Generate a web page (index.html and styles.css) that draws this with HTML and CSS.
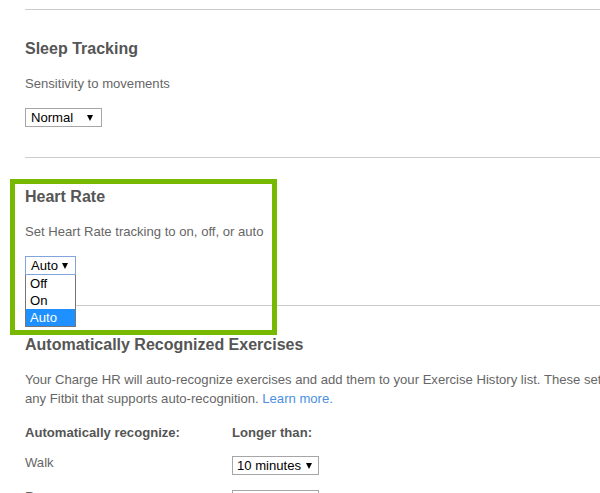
FILE: index.html
```html
<!DOCTYPE html>
<html lang="en">
<head>
  <meta charset="UTF-8">
  <meta name="viewport" content="width=device-width, initial-scale=1.0">
  <title>Device Settings</title>
  <link rel="stylesheet" href="styles.css">
</head>
<body>
  <div class="settings">
    <section class="setting">
      <h2>Sleep Tracking</h2>
      <p>Sensitivity to movements</p>
      <div class="select select-normal">
        <span class="select-value">Normal</span>
        <span class="select-arrow"></span>
      </div>
    </section>

    <section class="setting">
      <h2>Heart Rate</h2>
      <p>Set Heart Rate tracking to on, off, or auto</p>
      <div class="select-wrap">
        <div class="select select-auto is-open">
          <span class="select-value">Auto</span>
          <span class="select-arrow"></span>
        </div>
        <ul class="select-menu">
          <li>Off</li>
          <li>On</li>
          <li class="is-selected">Auto</li>
        </ul>
      </div>
    </section>

    <section class="setting">
      <h2>Automatically Recognized Exercises</h2>
      <p>Your Charge HR will auto-recognize exercises and add them to your Exercise History list. These settings apply to<br>any Fitbit that supports auto-recognition. <a href="#">Learn more.</a></p>
      <div class="exercise-grid">
        <div class="grid-head">Automatically recognize:</div>
        <div class="grid-head">Longer than:</div>

        <div class="grid-label">Walk</div>
        <div class="select select-minutes">
          <span class="select-value">10 minutes</span>
          <span class="select-arrow"></span>
        </div>

        <div class="grid-label">Run</div>
        <div class="select select-minutes">
          <span class="select-value">10 minutes</span>
          <span class="select-arrow"></span>
        </div>
      </div>
    </section>
  </div>

  <div class="highlight"></div>
</body>
</html>
```

FILE: styles.css
```css
html, body {
  overflow: hidden;
}
body {
  margin: 0;
  padding: 0;
  background: #fff;
  color: #666;
  font-family: "Liberation Sans", Arial, sans-serif;
  font-size: 13.1px;
}
.settings {
  width: 760px;
  padding: 9px 0 0 25px;
}
.setting {
  border-top: 1px solid #ccc;
  padding: 29px 0 30px;
}
.setting h2 {
  margin: 0 0 15px;
  font-size: 16px;
  line-height: 20px;
  color: #555;
}
.setting p {
  margin: 0 0 15px;
  line-height: 19px;
}
.setting a {
  color: #4a8fe2;
  text-decoration: none;
}

/* fake select boxes */
.select {
  display: flex;
  align-items: center;
  box-sizing: border-box;
  height: 19px;
  padding: 0 8px 0 5px;
  border: 1px solid #a6a6a6;
  background: #fff;
  color: #000;
  line-height: 17px;
}
.select-arrow {
  margin-left: auto;
  width: 0;
  height: 0;
  border-left: 3px solid transparent;
  border-right: 3px solid transparent;
  border-top: 6px solid #000;
}
.select-normal {
  width: 77px;
}
.select-auto {
  width: 51px;
  padding-right: 7px;
}
.select-minutes {
  width: 87px;
  padding: 0 6px 0 4px;
}
.select.is-open {
  border-color: #7fa5dc;
}
.select-wrap {
  position: relative;
  width: 51px;
}
.select-menu {
  position: absolute;
  top: 100%;
  left: 0;
  z-index: 2;
  box-sizing: border-box;
  width: 51px;
  margin: 0;
  padding: 0;
  list-style: none;
  border: 1px solid #767676;
  border-top: 0;
  background: #fff;
  color: #000;
}
.select-menu li {
  height: 17px;
  line-height: 17px;
  padding-left: 4px;
}
.select-menu li.is-selected {
  background: #1e90ff;
  color: #fff;
}

.exercise-grid {
  display: grid;
  grid-template-columns: 207px auto;
  grid-template-rows: 30px 34px 34px;
  align-items: start;
  margin-top: 14px;
}
.exercise-grid .grid-head {
  font-weight: bold;
  color: #555;
  line-height: 19px;
}
.grid-label {
  line-height: 19px;
}
.exercise-grid .select {
  margin-top: 3px;
}

/* green callout frame drawn over the heart rate block */
.highlight {
  position: absolute;
  left: 10px;
  top: 179px;
  width: 267px;
  height: 156px;
  box-sizing: border-box;
  border: 5px solid #76b900;
  pointer-events: none;
}
```
